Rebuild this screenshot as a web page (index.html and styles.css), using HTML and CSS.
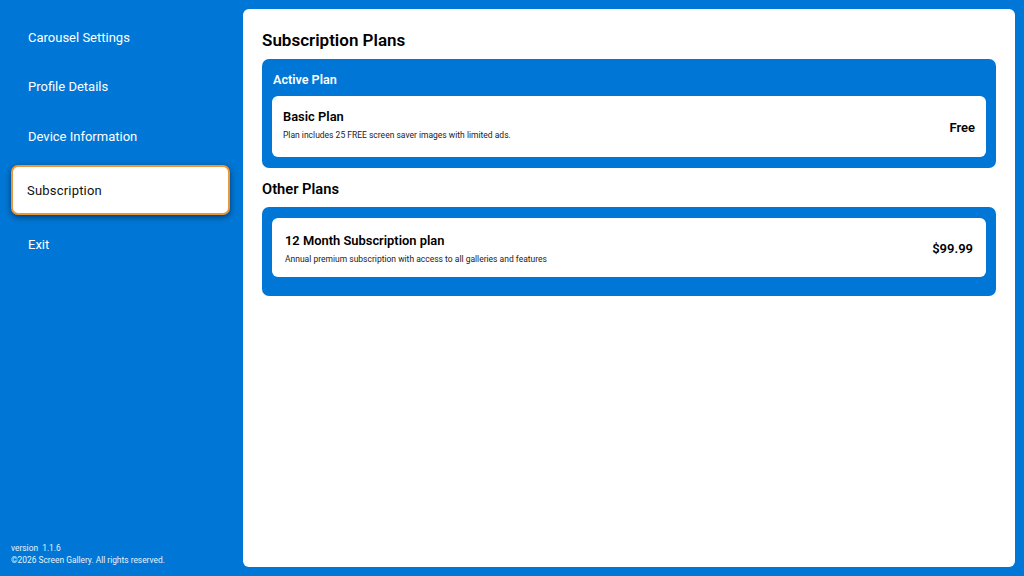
FILE: index.html
```html
<!DOCTYPE html>
<html lang="en">
<head>
<meta charset="utf-8">
<title>Subscription</title>
<link rel="stylesheet" href="styles.css">
</head>
<body>
<div class="app">
  <aside class="sidebar">
    <nav class="menu">
      <div class="item">Carousel Settings</div>
      <div class="item">Profile Details</div>
      <div class="item">Device Information</div>
      <div class="item active">Subscription</div>
      <div class="item exit">Exit</div>
    </nav>
    <div class="foot">
      <div>version&nbsp; 1.1.6</div>
      <div>©2026 Screen Gallery. All rights reserved.</div>
    </div>
  </aside>
  <main class="panel">
    <h1>Subscription Plans</h1>
    <section class="box active-box">
      <h3>Active Plan</h3>
      <div class="card basic">
        <div class="info">
          <div class="name">Basic Plan</div>
          <div class="desc">Plan includes 25 FREE screen saver images with limited ads.</div>
        </div>
        <div class="price free">Free</div>
      </div>
    </section>
    <h2>Other Plans</h2>
    <section class="box other-box">
      <div class="card month">
        <div>
          <div class="name">12 Month Subscription plan</div>
          <div class="desc">Annual premium subscription with access to all galleries and features</div>
        </div>
        <div class="price">$99.99</div>
      </div>
    </section>
  </main>
</div>
</body>
</html>
```
FILE: styles.css
```css
* { box-sizing: border-box; }
html, body { margin: 0; height: 100%; }
body { background: #0077d6; font-family: Roboto, "Liberation Sans", sans-serif; color: #000; overflow: hidden; }
.app { display: flex; height: 576px; padding: 9px 9px 9px 0; }
.sidebar { width: 243px; flex: none; display: flex; flex-direction: column; justify-content: space-between; padding-top: 3.5px; }
.menu { display: flex; flex-direction: column; }
.item { height: 49.5px; padding-left: 28px; display: flex; align-items: center; color: #fff; font-size: 13px; }
.item.active { width: 219px; height: 50px; margin: 3.5px 0 5.5px 11px; padding: 1px 0 0 14px; background: #fff; color: #111; font-size: 13px; letter-spacing: 0.2px; border: 2.5px solid #e9973a; border-radius: 7px; box-shadow: 0 2px 6px rgba(0,0,0,.5); }
.foot { padding-left: 11px; color: #e6f2fb; font-size: 8.4px; line-height: 12px; margin-bottom: 1px; }
.panel { flex: 1; background: #fff; border-radius: 6px; padding: 20px 19px 0; }
h1 { margin: 0 0 8px; font-size: 17px; line-height: 22px; font-weight: 600; }
h2 { margin: 11px 0 8px; font-size: 14.7px; line-height: 20px; font-weight: 600; }
h3 { margin: 1px 0 6px 1px; font-size: 12.6px; line-height: 20px; font-weight: 600; color: #fff; }
.box { background: #0077d6; border-radius: 7px; padding: 10px; }
.active-box { height: 109px; }
.other-box { height: 89px; }
.card { background: #fff; border-radius: 6px; display: flex; align-items: center; justify-content: space-between; }
.basic { height: 61px; padding: 0 11px; }
.info { padding-bottom: 4px; }
.free { padding-top: 2px; }
.month { height: 59px; margin-top: 1px; padding: 2px 13px 0 13px; }
.name { font-size: 12.9px; font-weight: 600; line-height: 16px; margin-bottom: 4px; }
.desc { font-size: 8.5px; line-height: 12px; color: #222; }
.price { font-size: 13px; font-weight: 600; }
```
